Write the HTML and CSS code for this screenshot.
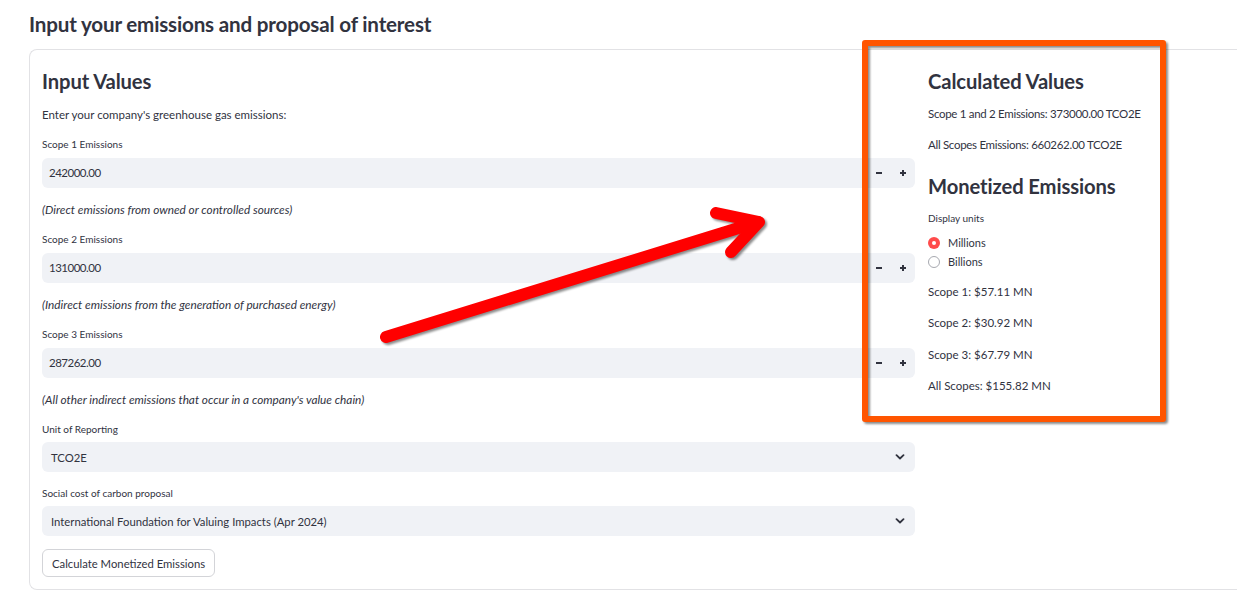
FILE: index.html
```html
<!DOCTYPE html>
<html>
<head>
<meta charset="utf-8">
<link rel="stylesheet" href="styles.css">
</head>
<body>
<div class="page">
  <h2 class="title">Input your emissions and proposal of interest</h2>
  <div class="card">
    <div class="col left">
      <h3 class="h3 h-left">Input Values</h3>
      <p class="text intro">Enter your company's greenhouse gas emissions:</p>

      <div class="widget">
        <label class="lbl">Scope 1 Emissions</label>
        <div class="numin">
          <span class="val num">242000.00</span>
          <span class="step"><svg width="8" height="8" viewBox="0 0 8 8"><path d="M1 4H7" stroke="#31333f" stroke-width="2"/></svg></span>
          <span class="step"><svg width="8" height="8" viewBox="0 0 8 8"><path d="M1 4H7M4 1V7" stroke="#31333f" stroke-width="2"/></svg></span>
        </div>
      </div>
      <p class="text cap"><em>(Direct emissions from owned or controlled sources)</em></p>

      <div class="widget">
        <label class="lbl">Scope 2 Emissions</label>
        <div class="numin">
          <span class="val num">131000.00</span>
          <span class="step"><svg width="8" height="8" viewBox="0 0 8 8"><path d="M1 4H7" stroke="#31333f" stroke-width="2"/></svg></span>
          <span class="step"><svg width="8" height="8" viewBox="0 0 8 8"><path d="M1 4H7M4 1V7" stroke="#31333f" stroke-width="2"/></svg></span>
        </div>
      </div>
      <p class="text cap"><em>(Indirect emissions from the generation of purchased energy)</em></p>

      <div class="widget">
        <label class="lbl">Scope 3 Emissions</label>
        <div class="numin">
          <span class="val num">287262.00</span>
          <span class="step"><svg width="8" height="8" viewBox="0 0 8 8"><path d="M1 4H7" stroke="#31333f" stroke-width="2"/></svg></span>
          <span class="step"><svg width="8" height="8" viewBox="0 0 8 8"><path d="M1 4H7M4 1V7" stroke="#31333f" stroke-width="2"/></svg></span>
        </div>
      </div>
      <p class="text cap"><em>(All other indirect emissions that occur in a company's value chain)</em></p>

      <div class="widget sel-widget">
        <label class="lbl">Unit of Reporting</label>
        <div class="select">
          <span class="val sval">TCO2E</span>
          <svg class="chev" width="10" height="6" viewBox="0 0 10 6"><path d="M1.5 1.2L5 4.5L8.5 1.2" fill="none" stroke="#31333f" stroke-width="1.8" stroke-linecap="round" stroke-linejoin="round"/></svg>
        </div>
      </div>

      <div class="widget sel-widget">
        <label class="lbl">Social cost of carbon proposal</label>
        <div class="select">
          <span class="val sval">International Foundation for Valuing Impacts (Apr 2024)</span>
          <svg class="chev" width="10" height="6" viewBox="0 0 10 6"><path d="M1.5 1.2L5 4.5L8.5 1.2" fill="none" stroke="#31333f" stroke-width="1.8" stroke-linecap="round" stroke-linejoin="round"/></svg>
        </div>
      </div>

      <div class="btn-row"><button class="btn">Calculate Monetized Emissions</button></div>
    </div>

    <div class="col right">
      <h3 class="h3 h-calc">Calculated Values</h3>
      <p class="text r1">Scope 1 and 2 Emissions: 373000.00 TCO2E</p>
      <p class="text r2">All Scopes Emissions: 660262.00 TCO2E</p>
      <h3 class="h3 h-mon">Monetized Emissions</h3>
      <label class="lbl units">Display units</label>
      <div class="radios">
        <div class="radio"><span class="dot on"></span><span>Millions</span></div>
        <div class="radio"><span class="dot off"></span><span>Billions</span></div>
      </div>
      <p class="text res">Scope 1: $57.11 MN</p>
      <p class="text res">Scope 2: $30.92 MN</p>
      <p class="text res">Scope 3: $67.79 MN</p>
      <p class="text res">All Scopes: $155.82 MN</p>
    </div>
  </div>
</div>

<svg class="arrow" width="1237" height="605" viewBox="0 0 1237 605">
  <g fill="none" stroke="#ff0000" stroke-width="12" stroke-linecap="round" stroke-linejoin="round">
    <path d="M386 337L758 222"/>
    <path d="M716 213L759 222L731 252"/>
  </g>
</svg>
<div class="frame"></div>
</body>
</html>
```

FILE: styles.css
```css
html, body {
  margin: 0;
  padding: 0;
  overflow: hidden;
  background: #ffffff;
}

body {
  position: relative;
  width: 1237px;
  height: 605px;
  font-family: Lato, "Noto Sans", sans-serif;
  color: #31333f;
}

.page {
  padding: 10px 0 0 29px;
}

.title {
  margin: 0;
  font-size: 20.6px;
  line-height: 28px;
  font-weight: 700;
  letter-spacing: -0.18px;
}

.card {
  margin-top: 11px;
  width: 1208px;
  box-sizing: border-box;
  border: 1px solid #e2e2e5;
  border-right: 0;
  border-radius: 8px 0 0 8px;
  padding: 16px 0 12px 12px;
  display: flex;
  gap: 13px;
}

.col {
  display: flex;
  flex-direction: column;
  align-items: stretch;
}

.left {
  flex: 0 0 873px;
}

.right {
  flex: 0 0 300px;
}

.h3 {
  margin: 0;
  font-size: 20.2px;
  line-height: 30px;
  height: 30px;
  font-weight: 700;
  letter-spacing: -0.1px;
}

.text {
  margin: 0;
  font-size: 11.5px;
  line-height: 19px;
  height: 19px;
}

.h-left { margin-bottom: 9px; }
.intro { margin-bottom: 12px; }

.widget { margin-bottom: 12px; }

.lbl {
  display: block;
  font-size: 10px;
  line-height: 16px;
  height: 16px;
  margin-bottom: 6px;
}

.sel-widget { margin-bottom: 13px; }
.sel-widget .lbl { margin-bottom: 5px; }

.cap {
  font-size: 11.8px;
  margin-bottom: 12px;
}

.numin, .select {
  height: 30px;
  display: flex;
  align-items: center;
  background: #f0f2f6;
  border-radius: 6px;
}

.val {
  flex: 1;
  padding-left: 7px;
  font-size: 11.5px;
}

.num {
  letter-spacing: -0.5px;
  padding-bottom: 2px;
}

.sval {
  padding-left: 9px;
  font-size: 11.3px;
}

.step {
  width: 24px;
  height: 30px;
  display: flex;
  align-items: center;
  justify-content: center;
}

.chev {
  margin-right: 10px;
}

.btn-row { display: flex; }

.btn {
  height: 28px;
  padding: 0 9px;
  border: 1px solid #d3d4d8;
  border-radius: 6px;
  background: #ffffff;
  font-family: inherit;
  font-size: 11.3px;
  color: #31333f;
}

.h-calc { margin-bottom: 8px; }
.r1 { margin-bottom: 12px; letter-spacing: -0.3px; }
.r2 { margin-bottom: 17px; letter-spacing: -0.3px; }
.h-mon { margin-bottom: 9px; }
.units { margin-bottom: 7px; }

.radios {
  display: flex;
  flex-direction: column;
  margin-bottom: 11px;
}

.radio {
  display: flex;
  align-items: center;
  height: 19px;
  font-size: 11px;
}

.dot {
  width: 12px;
  height: 12px;
  border-radius: 50%;
  box-sizing: border-box;
  margin-right: 8px;
  display: flex;
  align-items: center;
  justify-content: center;
}

.dot.on {
  background: #ff4b4b;
}

.dot.on::after {
  content: "";
  width: 4px;
  height: 4px;
  border-radius: 50%;
  background: #ffffff;
}

.dot.off {
  border: 1px solid #a7a9b0;
  background: #ffffff;
}

.res {
  margin-bottom: 12.4px;
}

.arrow {
  position: absolute;
  left: 0;
  top: 0;
  pointer-events: none;
  filter: drop-shadow(2px 2px 1px rgba(0, 0, 0, 0.45));
}

.frame {
  position: absolute;
  left: 862px;
  top: 40px;
  width: 304px;
  height: 382px;
  box-sizing: border-box;
  border: 6px solid #ff5500;
  border-radius: 3px;
  filter: drop-shadow(2px 2px 1px rgba(0, 0, 0, 0.45));
  pointer-events: none;
}
```
